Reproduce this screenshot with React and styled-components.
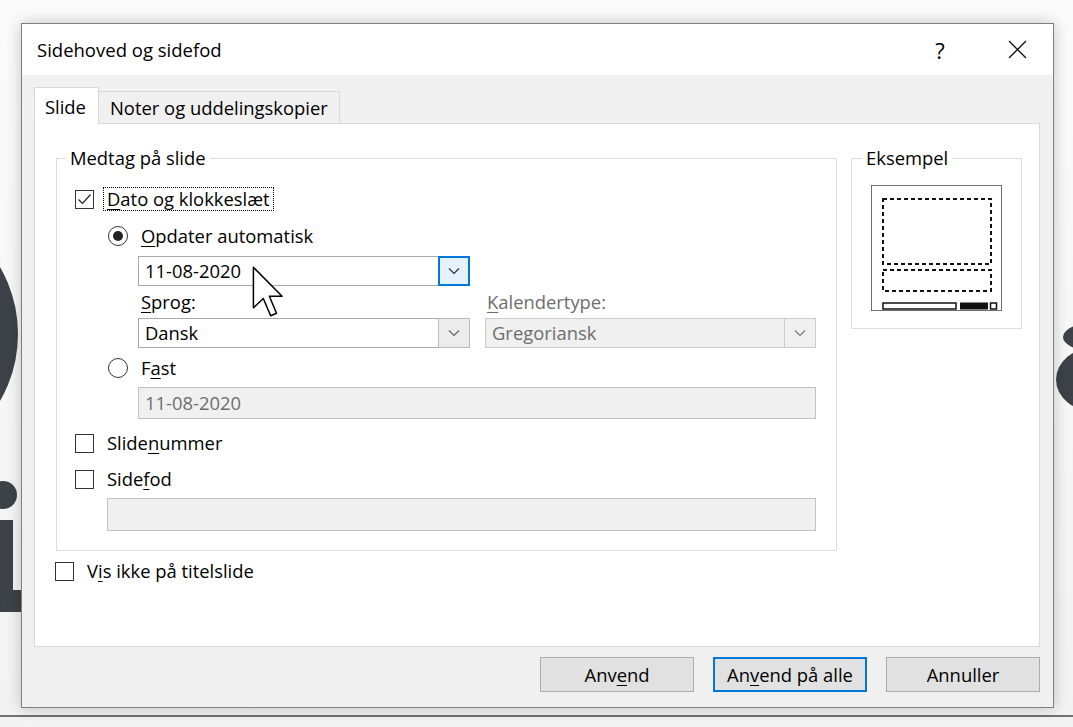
import React from 'react'
import styled, { createGlobalStyle } from 'styled-components'

const GlobalStyle = createGlobalStyle`
  html, body { margin: 0; padding: 0; }
  body {
    background: #f5f5f5;
    font-family: "Open Sans", "Noto Sans", sans-serif;
    font-size: 18.4px;
    color: #000;
  }
`

const Page = styled.div`
  position: relative;
  width: 1073px;
  height: 727px;
  overflow: hidden;
  box-sizing: border-box;
  padding-top: 23px;
  background: linear-gradient(180deg, #fbfbfb 0%, #f2f2f2 100%);
`

/* big letters of the slide behind the dialog */
const LeftBowl = styled.div`
  position: absolute;
  left: -250px;
  top: 200px;
  width: 268px;
  height: 268px;
  border-radius: 50%;
  background: #3d4248;
`
const LeftDot = styled.div`
  position: absolute;
  left: -11px;
  top: 481px;
  width: 28px;
  height: 28px;
  border-radius: 50%;
  background: #3d4248;
`
const LeftStem = styled.div`
  position: absolute;
  left: -20px;
  top: 520px;
  width: 33px;
  height: 92px;
  background: #3d4248;
`
const LeftFoot = styled.div`
  position: absolute;
  left: 0;
  top: 590px;
  width: 24px;
  height: 22px;
  border-radius: 0 0 0 12px;
  background: #3d4248;
`
const RightHook = styled.div`
  position: absolute;
  left: 1063px;
  top: 323px;
  width: 60px;
  height: 28px;
  border-radius: 50%;
  background: #3d4248;
`
const RightBowl = styled.div`
  position: absolute;
  left: 1056px;
  top: 347px;
  width: 80px;
  height: 65px;
  border-radius: 50%;
  background: #3d4248;
`

const Dialog = styled.div`
  position: relative;
  z-index: 1;
  margin-left: 21px;
  width: 1033px;
  height: 685px;
  box-sizing: border-box;
  border: 1px solid #7f7f7f;
  background: #f0f0f0;
  box-shadow: 0 0 14px rgba(0, 0, 0, 0.22);
  display: flex;
  flex-direction: column;
`

const BaseLine = styled.div`
  margin-top: 7px;
  height: 2px;
  background: #707070;
`

const TitleBar = styled.div`
  height: 51px;
  flex: none;
  background: #fff;
  display: flex;
  align-items: center;
  padding-left: 15px;
`
const Title = styled.div`
  flex: 1;
  font-size: 18.5px;
`
const CaptionButton = styled.div`
  width: 70px;
  height: 51px;
  display: flex;
  align-items: center;
  justify-content: center;
  font-size: 22px;
  margin-right: ${p => p.$last ? '1px' : '7px'};
`

const Body = styled.div`
  flex: 1;
  display: flex;
  flex-direction: column;
  padding: 12px 13px 0 12px;
`

const TabStrip = styled.div`
  display: flex;
  align-items: flex-end;
  height: 36px;
`
const Tab = styled.div`
  position: relative;
  z-index: ${p => p.$active ? 2 : 1};
  box-sizing: border-box;
  height: ${p => p.$active ? '37px' : '32px'};
  margin-bottom: ${p => p.$active ? '-1px' : '0'};
  padding-left: ${p => p.$active ? '10px' : '11px'};
  display: flex;
  align-items: center;
  white-space: nowrap;
  background: ${p => p.$active ? '#fff' : '#f0f0f0'};
  border: 1px solid #d9d9d9;
  border-bottom: none;
  border-left: ${p => p.$active ? '1px solid #d9d9d9' : 'none'};
  width: ${p => p.$w}px;
`

const Panel = styled.div`
  height: 524px;
  box-sizing: border-box;
  background: #fff;
  border: 1px solid #d9d9d9;
  padding: 24px 0 0 21px;
`

const GroupRow = styled.div`
  display: flex;
  align-items: flex-start;
  gap: 14px;
`

const Group = styled.fieldset`
  margin: 0;
  min-width: 0;
  box-sizing: border-box;
  width: ${p => p.$w}px;
  height: ${p => p.$h}px;
  border: 1px solid #dcdcdc;
  padding: 0 19px 0 ${p => p.$pl}px;
  display: flex;
  flex-direction: column;
`
const Legend = styled.legend`
  padding: 0 4px;
  margin-left: -9px;
  line-height: 20px;
`

const Row = styled.div`
  display: flex;
  align-items: center;
  height: 24px;
  margin-top: ${p => p.$mt}px;
  margin-left: ${p => p.$ml || 0}px;
`

const CheckBox = styled.div`
  width: 19px;
  height: 19px;
  box-sizing: border-box;
  border: 1.5px solid #333;
  background: #fff;
  display: flex;
  align-items: center;
  justify-content: center;
  margin-right: 13px;
  flex: none;
`

const Radio = styled.div`
  width: 20px;
  height: 20px;
  box-sizing: border-box;
  border-radius: 50%;
  border: 1.5px solid #333;
  display: flex;
  align-items: center;
  justify-content: center;
  margin-right: 13px;
  flex: none;
  &::after {
    content: '';
    display: ${p => p.$on ? 'block' : 'none'};
    width: 10px;
    height: 10px;
    border-radius: 50%;
    background: #222;
  }
`

const Label = styled.span`
  line-height: 24px;
  white-space: nowrap;
  color: ${p => p.$dim ? '#6d6d6d' : '#000'};
`
const FocusLabel = styled(Label)`
  margin-left: -4px;
  padding: 0 3px;
  border: 1px dotted #000;
  line-height: 22px;
`
const Key = styled.u`
  text-decoration: underline;
  text-underline-offset: 3px;
  text-decoration-thickness: 1px;
`

const Combo = styled.div`
  display: flex;
  box-sizing: border-box;
  height: 30px;
  width: ${p => p.$w}px;
  margin-left: ${p => p.$ml || 0}px;
  margin-top: ${p => p.$mt || 0}px;
  border: 1px solid ${p => p.$disabled ? '#cccccc' : '#a9a9a9'};
  background: ${p => p.$disabled ? '#f0f0f0' : '#fff'};
`
const ComboText = styled.div`
  flex: 1;
  padding-left: 6px;
  line-height: 28px;
  color: ${p => p.$disabled ? '#6d6d6d' : '#000'};
`
const DropButton = styled.div`
  width: 32px;
  margin: -1px -1px -1px 0;
  box-sizing: border-box;
  display: flex;
  align-items: center;
  justify-content: center;
  border: 1px solid ${p => p.$hot ? '#0078d7' : p.$disabled ? '#cccccc' : '#b9b9b9'};
  border-width: ${p => p.$hot ? '2px' : '1px'};
  background: ${p => p.$hot ? '#e5f1fb' : p.$disabled ? '#f0f0f0' : '#ececec'};
`

const FieldGrid = styled.div`
  display: grid;
  grid-template-columns: 332px 331px;
  column-gap: 15px;
  margin-left: 63px;
  margin-top: ${p => p.$mt}px;
`
const FieldLabel = styled(Label)`
  line-height: 20px;
  padding-left: ${p => p.$pl}px;
`

const TextBox = styled.div`
  box-sizing: border-box;
  height: ${p => p.$h}px;
  width: ${p => p.$w}px;
  margin-left: ${p => p.$ml}px;
  margin-top: 7px;
  border: 1px solid #c2c2c2;
  background: #f0f0f0;
  color: #6d6d6d;
  padding-left: 6px;
  line-height: ${p => p.$h - 2}px;
`

const Preview = styled.svg`
  display: block;
  margin-top: 17px;
`

const ButtonRow = styled.div`
  display: flex;
  justify-content: flex-end;
  gap: 19px;
  margin-top: 10px;
`
const Button = styled.div`
  width: 154px;
  height: 35px;
  box-sizing: border-box;
  display: flex;
  align-items: center;
  justify-content: center;
  background: #e1e1e1;
  border: ${p => p.$default ? '2px solid #0078d7' : '1px solid #adadad'};
`

const Cursor = styled.svg`
  position: absolute;
  left: 252px;
  top: 266px;
  z-index: 5;
`

function Chevron({ color = '#444' }) {
  return (
    <svg width="12" height="8" viewBox="0 0 12 8">
      <polyline points="1,1.5 6,6.5 11,1.5" fill="none" stroke={color} strokeWidth="1.2" />
    </svg>
  )
}

function CheckMark() {
  return (
    <svg width="15" height="15" viewBox="0 0 15 15">
      <polyline points="1.5,7.5 5.5,11.5 13.5,2.5" fill="none" stroke="#222" strokeWidth="1.2" />
    </svg>
  )
}

export default function App() {
  return (
    <Page>
      <GlobalStyle />
      <LeftBowl />
      <LeftDot />
      <LeftStem />
      <LeftFoot />
      <RightHook />
      <RightBowl />

      <Dialog>
        <TitleBar>
          <Title>Sidehoved og sidefod</Title>
          <CaptionButton>?</CaptionButton>
          <CaptionButton $last>
            <svg width="19" height="19" viewBox="0 0 19 19">
              <path d="M1 1 L18 18 M18 1 L1 18" stroke="#111" strokeWidth="1.3" />
            </svg>
          </CaptionButton>
        </TitleBar>

        <Body>
          <TabStrip>
            <Tab $active $w={65}>Slide</Tab>
            <Tab $w={241}>Noter og uddelingskopier</Tab>
          </TabStrip>

          <Panel>
            <GroupRow>
              <Group $w={781} $h={403} $pl={18}>
                <Legend>Medtag på slide</Legend>

                <Row $mt={19}>
                  <CheckBox><CheckMark /></CheckBox>
                  <FocusLabel><Key>D</Key>ato og klokkeslæt</FocusLabel>
                </Row>

                <Row $mt={13} $ml={33}>
                  <Radio $on />
                  <Label><Key>O</Key>pdater automatisk</Label>
                </Row>

                <Combo $w={332} $ml={63} $mt={8}>
                  <ComboText>11-08-2020</ComboText>
                  <DropButton $hot><Chevron color="#333" /></DropButton>
                </Combo>

                <FieldGrid $mt={6}>
                  <FieldLabel $pl={3}><Key>S</Key>prog:</FieldLabel>
                  <FieldLabel $pl={2} $dim><Key>K</Key>alendertype:</FieldLabel>
                </FieldGrid>

                <FieldGrid $mt={6}>
                  <Combo $w={332}>
                    <ComboText>Dansk</ComboText>
                    <DropButton><Chevron color="#666" /></DropButton>
                  </Combo>
                  <Combo $w={331} $disabled>
                    <ComboText $disabled>Gregoriansk</ComboText>
                    <DropButton $disabled><Chevron color="#777" /></DropButton>
                  </Combo>
                </FieldGrid>

                <Row $mt={8} $ml={33}>
                  <Radio />
                  <Label>F<Key>a</Key>st</Label>
                </Row>

                <TextBox $w={678} $h={32} $ml={63}>11-08-2020</TextBox>

                <Row $mt={12}>
                  <CheckBox />
                  <Label>Slide<Key>n</Key>ummer</Label>
                </Row>

                <Row $mt={12}>
                  <CheckBox />
                  <Label>Side<Key>f</Key>od</Label>
                </Row>

                <TextBox $w={709} $h={33} $ml={32} />
              </Group>

              <Group $w={171} $h={181} $pl={19}>
                <Legend>Eksempel</Legend>
                <Preview width="132" height="127" viewBox="0 0 132 127">
                  <rect x="0.5" y="0.5" width="130" height="125" fill="#fff" stroke="#6f6f7a" />
                  <rect x="12" y="14" width="108" height="65" fill="none" stroke="#111" strokeWidth="2" strokeDasharray="4 3" />
                  <rect x="12" y="85" width="108" height="21" fill="none" stroke="#111" strokeWidth="2" strokeDasharray="4 3" />
                  <rect x="12" y="118" width="73" height="6" fill="#fff" stroke="#111" strokeWidth="1.5" />
                  <rect x="89" y="117.5" width="28" height="7" fill="#111" />
                  <rect x="119.5" y="118" width="6" height="6" fill="#fff" stroke="#111" strokeWidth="1.5" />
                </Preview>
              </Group>
            </GroupRow>

            <Row $mt={8} $ml={-1}>
              <CheckBox />
              <Label>V<Key>i</Key>s ikke på titelslide</Label>
            </Row>
          </Panel>

          <ButtonRow>
            <Button>Anv<Key>e</Key>nd</Button>
            <Button $default>An<Key>v</Key>end på alle</Button>
            <Button>Annuller</Button>
          </ButtonRow>
        </Body>
      </Dialog>

      <BaseLine />

      <Cursor width="32" height="52" viewBox="0 0 12.5 20.5">
        <path d="M0.5 0.5 L0.5 16.5 L4.4 12.8 L7.3 19.6 L9.6 18.6 L6.8 11.9 L11.8 11.9 Z"
          fill="#fff" stroke="#000" strokeWidth="0.6" strokeLinejoin="round" />
      </Cursor>
    </Page>
  )
}
